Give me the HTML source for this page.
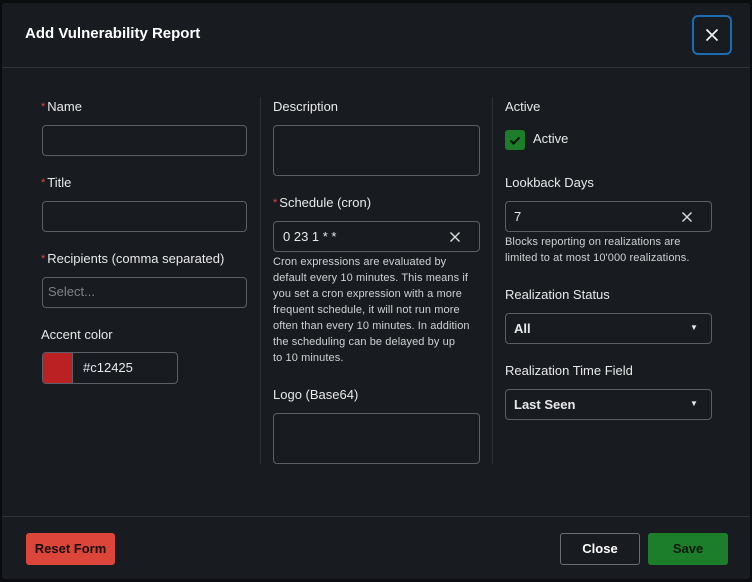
<!DOCTYPE html>
<html><head><style>
*{box-sizing:border-box;margin:0;padding:0}
body{width:752px;height:582px;background:#0b0c0e;font-family:"Liberation Sans",sans-serif;color:#e8e9ea;position:relative;overflow:hidden;font-size:13px}
.m{position:absolute;left:2px;top:3px;width:748px;height:576px;background:#181b1f;border-radius:3px}
.a{position:absolute}
.lbl{position:absolute;font-size:13px;color:#e8e9ea;line-height:16px}
.req{color:#e0493e;font-size:11px;vertical-align:top;margin-right:2px}
.in{position:absolute;border:1px solid #5a6068;border-radius:4px;background:#181b1f}
.help{position:absolute;font-size:11px;line-height:16px;color:#d0d2d4;white-space:nowrap;letter-spacing:0.1px}
.div{position:absolute;top:97px;width:1px;height:367px;background:#2c3036}
.btn{position:absolute;border-radius:3px;font-size:13px;font-weight:bold;text-align:center;line-height:32px;height:32px}
.x{position:absolute;width:10px;height:10px}
</style></head><body>
<div class="m"></div>
<div class="lbl" style="left:25px;top:26px;font-size:15px;font-weight:bold;color:#fff">Add Vulnerability Report</div>
<div class="a" style="left:692px;top:15px;width:40px;height:40px;border:2px solid #1b6cb3;border-radius:6px"><svg width="36" height="36"><path d="M12.5 12.5l11 11M23.5 12.5l-11 11" stroke="#fff" stroke-width="1.6"/></svg></div>
<div class="a" style="left:2px;top:67px;width:748px;height:1px;background:#2f343a"></div>
<div class="a" style="left:2px;top:516px;width:748px;height:1px;background:#2f343a"></div>
<div class="div" style="left:260px"></div><div class="div" style="left:492px"></div>

<div class="lbl" style="left:41px;top:99px"><span class="req">*</span>Name</div>
<div class="in" style="left:42px;top:125px;width:205px;height:31px"></div>
<div class="lbl" style="left:41px;top:175px"><span class="req">*</span>Title</div>
<div class="in" style="left:42px;top:201px;width:205px;height:31px"></div>
<div class="lbl" style="left:41px;top:251px"><span class="req">*</span>Recipients (comma separated)</div>
<div class="in" style="left:42px;top:277px;width:205px;height:31px;color:#7d838a;padding:6px 5px;font-size:13px">Select...</div>
<div class="lbl" style="left:41px;top:327px">Accent color</div>
<div class="in" style="left:42px;top:352px;width:136px;height:32px;overflow:hidden"><div class="a" style="left:0;top:0;width:30px;height:30px;background:#bb2022;border-right:1px solid #5a6068"></div><div class="a" style="left:40px;top:7px">#c12425</div></div>

<div class="lbl" style="left:273px;top:99px">Description</div>
<div class="in" style="left:273px;top:125px;width:207px;height:51px"></div>
<div class="lbl" style="left:273px;top:195px"><span class="req">*</span>Schedule (cron)</div>
<div class="in" style="left:273px;top:221px;width:207px;height:31px"><div class="a" style="left:9px;top:7px">0 23 1 * *</div><svg class="x" style="left:176px;top:10px"><path d="M0.5 0.5l9 9M9.5 0.5l-9 9" stroke="#ddd" stroke-width="1.4"/></svg></div>
<div class="help" style="left:273px;top:254px">Cron expressions are evaluated by<br>default every 10 minutes. This means if<br>you set a cron expression with a more<br>frequent schedule, it will not run more<br>often than every 10 minutes. In addition<br>the scheduling can be delayed by up<br>to 10 minutes.</div>
<div class="lbl" style="left:273px;top:387px">Logo (Base64)</div>
<div class="in" style="left:273px;top:413px;width:207px;height:51px"></div>

<div class="lbl" style="left:505px;top:99px">Active</div>
<div class="a" style="left:505px;top:130px;width:20px;height:20px;background:#1c7d2b;border-radius:3px"><svg width="20" height="20"><path d="M5.5 10.5l3 3 6-6" stroke="#0a1a0c" stroke-width="2.2" fill="none"/></svg></div>
<div class="lbl" style="left:533px;top:131px">Active</div>
<div class="lbl" style="left:505px;top:175px">Lookback Days</div>
<div class="in" style="left:505px;top:201px;width:207px;height:31px"><div class="a" style="left:8px;top:7px">7</div><svg class="x" style="left:176px;top:10px"><path d="M0.5 0.5l9 9M9.5 0.5l-9 9" stroke="#ddd" stroke-width="1.4"/></svg></div>
<div class="help" style="left:505px;top:234px">Blocks reporting on realizations are<br>limited to at most 10'000 realizations.</div>
<div class="lbl" style="left:505px;top:287px">Realization Status</div>
<div class="in" style="left:505px;top:313px;width:207px;height:31px"><div class="a" style="left:8px;top:7px;font-weight:bold">All</div><div class="a" style="left:184px;top:9px;font-size:8px">▼</div></div>
<div class="lbl" style="left:505px;top:363px">Realization Time Field</div>
<div class="in" style="left:505px;top:389px;width:207px;height:31px"><div class="a" style="left:8px;top:7px;font-weight:bold">Last Seen</div><div class="a" style="left:184px;top:9px;font-size:8px">▼</div></div>

<div class="btn" style="left:26px;top:533px;width:89px;background:#dc4539;color:#1a0a08">Reset Form</div>
<div class="btn" style="left:560px;top:533px;width:80px;border:1px solid #6a7078;color:#fff;line-height:30px">Close</div>
<div class="btn" style="left:648px;top:533px;width:80px;background:#1c7d2b;color:#0b1a0d">Save</div>
</body></html>
